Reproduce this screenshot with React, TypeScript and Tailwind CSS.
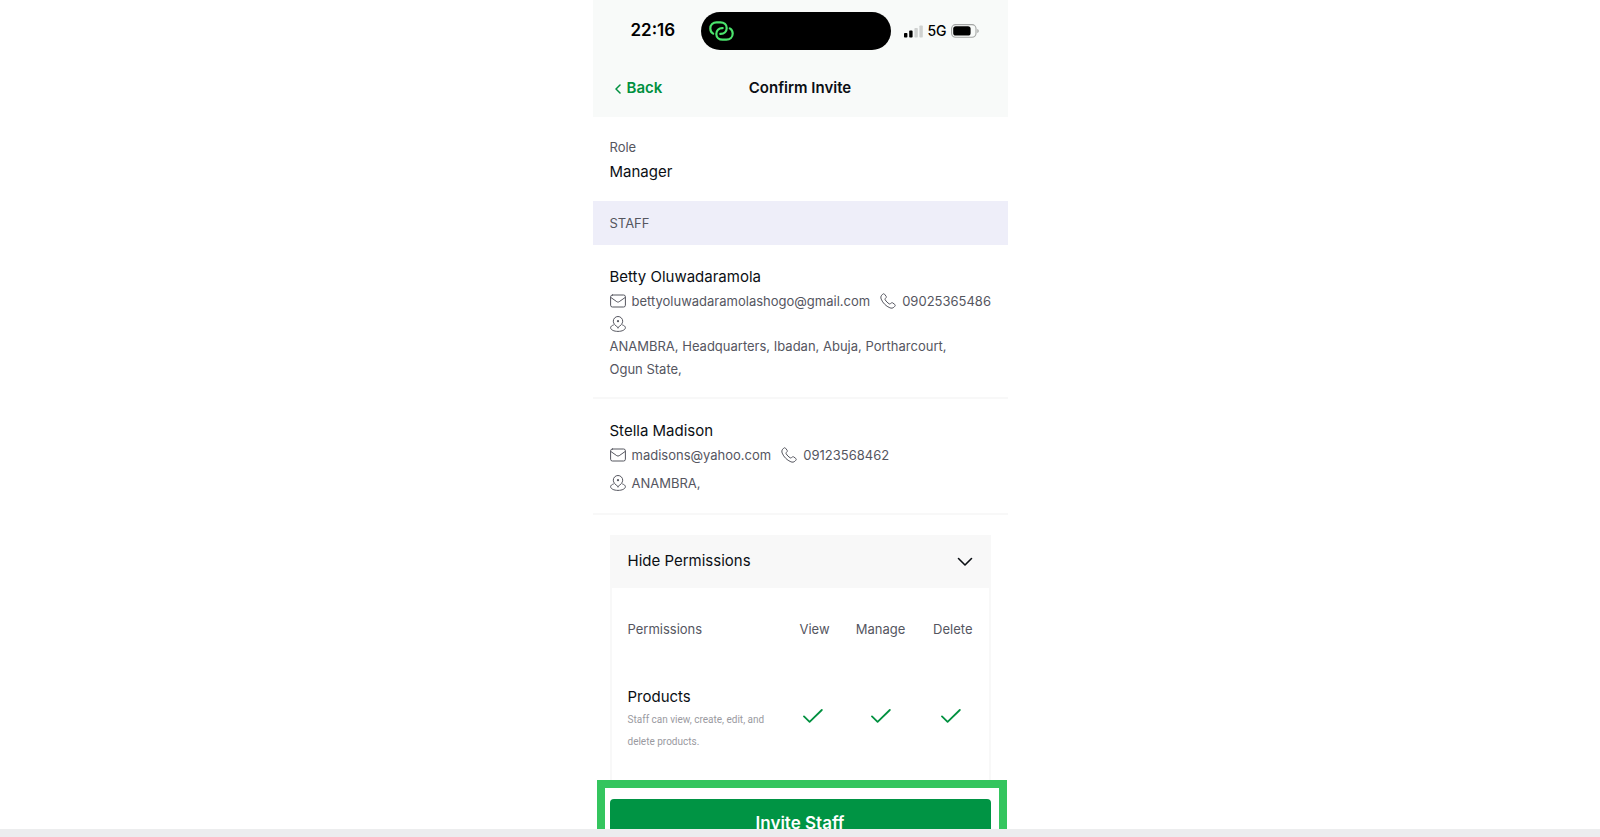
import React from "react";

type Staff = {
  name: string;
  email: string;
  phone: string;
  locations: string;
  stacked: boolean;
};

const staff: Staff[] = [
  {
    name: "Betty Oluwadaramola",
    email: "bettyoluwadaramolashogo@gmail.com",
    phone: "09025365486",
    locations: "ANAMBRA, Headquarters, Ibadan, Abuja, Portharcourt, Ogun State,",
    stacked: true,
  },
  {
    name: "Stella Madison",
    email: "madisons@yahoo.com",
    phone: "09123568462",
    locations: "ANAMBRA,",
    stacked: false,
  },
];

function LinkRingsIcon() {
  return (
    <svg width="25" height="20" viewBox="0 0 25 20" fill="none" stroke="#4be36c" strokeWidth="2.2" strokeLinecap="round" aria-hidden="true">
      <path d="M4.200 12.600C2.400 11.600 1.300 9.800 1.300 7.400C1.300 3.900 4 1.300 7.600 1.300H11.400C15 1.300 17.700 3.700 17.700 7C17.700 10.400 15.200 12.900 11.800 12.900H11.300" />
      <path d="M20.800 7.400C22.600 8.400 23.700 10.200 23.700 12.600C23.700 16.100 21 18.700 17.400 18.700H13.600C10 18.700 7.300 16.300 7.300 13C7.300 9.600 9.800 7.100 13.200 7.100H13.700" />
    </svg>
  );
}

function SignalIcon() {
  return (
    <svg width="19" height="13" viewBox="0 0 19 13" aria-hidden="true">
      <rect x="0" y="8" width="3.4" height="4.6" rx="0.8" fill="#000" />
      <rect x="5.2" y="5.6" width="3.4" height="7" rx="0.8" fill="#000" />
      <rect x="10.4" y="3" width="3.4" height="9.6" rx="0.8" fill="#cfd1d0" />
      <rect x="15.4" y="0.4" width="3.4" height="12.2" rx="0.8" fill="#cfd1d0" />
    </svg>
  );
}

function BatteryIcon() {
  return (
    <svg width="28" height="14" viewBox="0 0 28 14" aria-hidden="true">
      <rect x="0.6" y="0.6" width="24.4" height="12.6" rx="4" fill="none" stroke="#a3a5a4" strokeWidth="1.1" />
      <rect x="2.2" y="2.2" width="17.4" height="9.4" rx="2.6" fill="#000" />
      <path d="M26.3 5v4c.9-.3 1.4-1.100 1.400-2s-.5-1.700-1.400-2z" fill="#a3a5a4" />
    </svg>
  );
}

function MailIcon() {
  return (
    <svg className="shrink-0" width="16" height="16" viewBox="0 0 16 16" fill="none" stroke="#55565f" strokeWidth="1" strokeLinecap="round" strokeLinejoin="round" aria-hidden="true">
      <rect x="0.6" y="2" width="14.8" height="12" rx="1.800" />
      <path d="M1 4.600L6.800 8.700C7.600 9.200 8.400 9.200 9.200 8.700L15 4.600" />
    </svg>
  );
}

function PhoneIcon() {
  return (
    <svg className="shrink-0" width="16" height="16" viewBox="0 0 16 16" fill="none" stroke="#55565f" strokeWidth="1" strokeLinejoin="round" aria-hidden="true">
      <path d="M1.700 2.200L2.700 1.200C3.300 .6 4 .6 4.500 1.200L6 3.100C6.500 3.800 6.400 4.400 5.900 4.900L5.300 5.500C4.900 5.900 4.900 6.400 5.200 6.900C6.200 8.500 7.500 9.800 9.100 10.800C9.600 11.100 10.100 11.100 10.500 10.700L11.100 10.100C11.600 9.600 12.200 9.500 12.900 10L14.800 11.500C15.400 12 15.400 12.700 14.800 13.300L13.800 14.300C12.900 15.200 11.300 15.400 9.900 14.800C6 13.200 2.800 10 1.200 6.100C.6 4.700 .8 3.100 1.700 2.200Z" />
    </svg>
  );
}

function PinIcon() {
  return (
    <svg className="shrink-0" width="16" height="16" viewBox="0 0 16 16" fill="none" stroke="#55565f" strokeWidth="1" strokeLinecap="round" strokeLinejoin="round" aria-hidden="true">
      <path d="M8 11.600C5.200 9.400 3.300 7.600 3.300 5.200A4.700 4.700 0 0 1 12.700 5.200C12.700 7.600 10.800 9.400 8 11.600Z" />
      <circle cx="8" cy="5.200" r="1.100" fill="#55565f" stroke="none" />
      <path d="M3.400 9C1.700 9.600 .6 10.500 .6 11.700C.6 13.800 3.900 15.400 8 15.400S15.400 13.800 15.400 11.700C15.400 10.500 14.300 9.600 12.600 9" />
    </svg>
  );
}

function CheckIcon({ label }: { label: string }) {
  return (
    <svg className="inline-block" width="20" height="14" viewBox="0 0 20 14" fill="none" stroke="#00903f" strokeWidth="1.800" strokeLinecap="round" strokeLinejoin="round" role="img" aria-label={label}>
      <path d="M1 7.400L6.600 12.800L18.800 1" />
    </svg>
  );
}

function StaffItem({ person }: { person: Staff }) {
  return (
    <li className="border-b-2 border-[#f8f8f8] px-[17px] pt-5 pb-4">
      <h2 className="text-[15px] leading-6 text-[#0b0f14]">{person.name}</h2>
      <div className="flex items-center gap-2.5 leading-6 whitespace-nowrap">
        <span className="flex items-center gap-1.5">
          <MailIcon />
          {person.email}
        </span>
        <span className="flex items-center gap-1.5">
          <PhoneIcon />
          {person.phone}
        </span>
      </div>
      {person.stacked ? (
        <div className="pr-6 leading-[23px]">
          <div className="flex h-[22px] items-center">
            <PinIcon />
          </div>
          <p>{person.locations}</p>
        </div>
      ) : (
        <div className="flex items-center gap-1.5 pt-0.5 leading-7">
          <PinIcon />
          <p>{person.locations}</p>
        </div>
      )}
    </li>
  );
}

export default function App() {
  return (
    <div className="flex h-screen flex-col bg-white font-['Inter','Liberation_Sans',sans-serif] text-[13px] text-[#55565f]">
      <div className="mx-auto flex min-h-0 w-full max-w-[415px] flex-1 flex-col">
        <header className="shrink-0 bg-[#f8faf9]">
          <div className="flex items-center pt-3 pr-[29px] pl-[38px]">
            <div className="w-[70px] text-[17px] font-semibold text-black">
              <time>22:16</time>
            </div>
            <div className="flex h-[38px] w-[190px] items-center rounded-full bg-black pl-2">
              <LinkRingsIcon />
            </div>
            <div className="flex flex-1 items-center justify-end gap-1 text-sm font-medium whitespace-nowrap text-black">
              <SignalIcon />
              <span>5G</span>
              <BatteryIcon />
            </div>
          </div>
          <div className="grid h-[67px] grid-cols-3 items-center px-[22px] pt-2.5 text-[15px] font-semibold">
            <button type="button" className="flex items-center gap-1.5 text-[#00903f]">
              <svg width="6" height="10" viewBox="0 0 6 10" fill="none" stroke="currentColor" strokeWidth="1.500" strokeLinecap="round" strokeLinejoin="round" aria-hidden="true">
                <path d="M5 1L1 5L5 9" />
              </svg>
              Back
            </button>
            <h1 className="text-center whitespace-nowrap text-[#0b0f14]">Confirm Invite</h1>
          </div>
        </header>

        <main className="min-h-0 flex-1 overflow-hidden">
          <dl className="px-[17px] pt-[18px] pb-4">
            <dt className="leading-6">Role</dt>
            <dd className="text-[15px] leading-[26px] text-[#0b0f14]">Manager</dd>
          </dl>
          <h2 className="bg-[#eeeef9] px-[17px] leading-[44px]">STAFF</h2>
          <ul>
            {staff.map((person) => (
              <StaffItem key={person.email} person={person} />
            ))}
          </ul>

          <section className="mx-[17px] mt-5 border-x-2 border-[#f8f8f8]">
            <button type="button" aria-expanded="true" className="flex h-[53px] w-full items-center justify-between bg-[#f8f8f8] px-4 text-[15px] text-[#0b0f14]">
              Hide Permissions
              <svg width="16" height="10" viewBox="0 0 16 10" fill="none" stroke="currentColor" strokeWidth="1.600" strokeLinecap="round" strokeLinejoin="round" aria-hidden="true">
                <path d="M1.500 1.500L8 8L14.500 1.500" />
              </svg>
            </button>
            <table className="w-full">
              <thead>
                <tr className="h-[84px]">
                  <th className="pl-4 text-left font-normal">Permissions</th>
                  <th className="w-[60px] font-normal">View</th>
                  <th className="w-[72px] font-normal">Manage</th>
                  <th className="w-[72px] pr-4 text-right font-normal">Delete</th>
                </tr>
              </thead>
              <tbody className="align-top">
                <tr>
                  <th scope="row" className="pt-[13px] pb-8 pl-4 text-left font-normal">
                    <span className="block text-[15px] leading-6 text-[#0b0f14]">Products</span>
                    <span className="block font-['Roboto','Liberation_Sans',sans-serif] text-[10px] leading-[22px] text-[#9a9a9f]">
                      Staff can view, create, edit, and
                      <br />
                      delete products.
                    </span>
                  </th>
                  <td className="pt-[34px] pr-1 text-center"><CheckIcon label="View allowed" /></td>
                  <td className="pt-[34px] text-center"><CheckIcon label="Manage allowed" /></td>
                  <td className="pt-[34px] pr-1 text-center"><CheckIcon label="Delete allowed" /></td>
                </tr>
              </tbody>
            </table>
          </section>
        </main>

        <div className="mr-px ml-1 h-[49px] shrink-0 overflow-hidden">
          <div className="border-8 border-[#34c55e] py-[11px] pr-2 pl-[5px]">
            <button type="button" className="h-[50px] w-full rounded bg-[#009444] text-[17px] font-semibold text-white">
              Invite Staff
            </button>
          </div>
        </div>
      </div>
      <div className="h-2 shrink-0 bg-[#ecedee]" />
    </div>
  );
}
